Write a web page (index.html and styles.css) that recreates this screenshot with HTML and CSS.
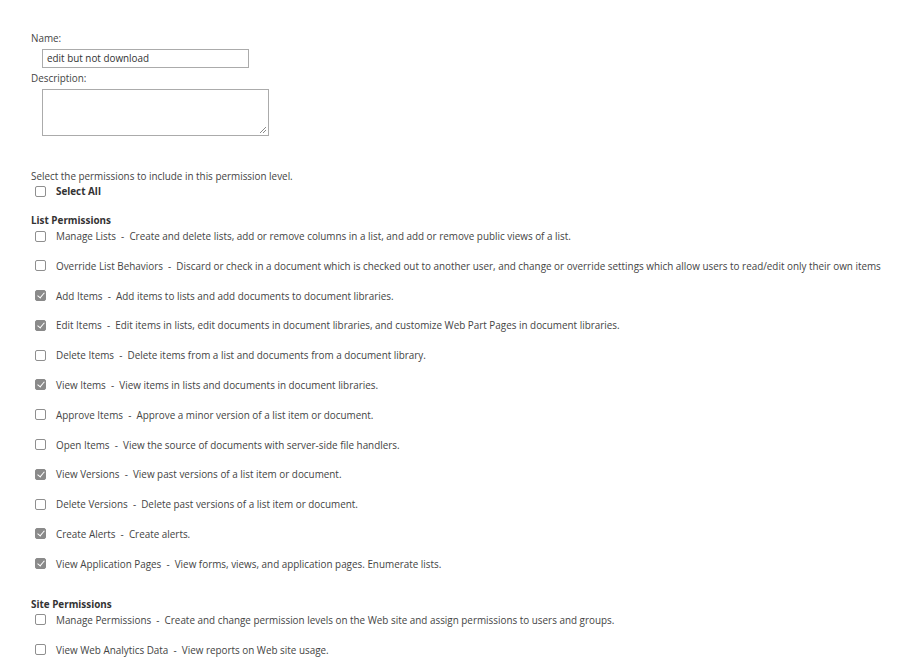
FILE: index.html
```html
<!DOCTYPE html>
<html>
<head>
<meta charset="utf-8">
<link rel="stylesheet" href="styles.css">
</head>
<body>
<div class="page">
  <div class="field">
    <div class="label">Name:</div>
    <div class="input">edit but not download</div>
  </div>
  <div class="field">
    <div class="label">Description:</div>
    <div class="textarea"><svg class="grip" width="8" height="8" viewBox="0 0 8 8"><path d="M7 1L1 7M7 4L4 7" stroke="#8a8a8a" stroke-width="1"/></svg></div>
  </div>

  <div class="intro">Select the permissions to include in this permission level.</div>
  <div class="selectall"><span class="cb"></span><b>Select All</b></div>

  <div class="group">List Permissions</div>
  <div class="rows">
    <div class="row"><span class="cb"></span>Manage Lists&nbsp; - &nbsp;Create and delete lists, add or remove columns in a list, and add or remove public views of a list.</div>
    <div class="row"><span class="cb"></span>Override List Behaviors&nbsp; - &nbsp;Discard or check in a document which is checked out to another user, and change or override settings which allow users to read/edit only their own items</div>
    <div class="row"><span class="cb on"></span>Add Items&nbsp; - &nbsp;Add items to lists and add documents to document libraries.</div>
    <div class="row"><span class="cb on"></span>Edit Items&nbsp; - &nbsp;Edit items in lists, edit documents in document libraries, and customize Web Part Pages in document libraries.</div>
    <div class="row"><span class="cb"></span>Delete Items&nbsp; - &nbsp;Delete items from a list and documents from a document library.</div>
    <div class="row"><span class="cb on"></span>View Items&nbsp; - &nbsp;View items in lists and documents in document libraries.</div>
    <div class="row"><span class="cb"></span>Approve Items&nbsp; - &nbsp;Approve a minor version of a list item or document.</div>
    <div class="row"><span class="cb"></span>Open Items&nbsp; - &nbsp;View the source of documents with server-side file handlers.</div>
    <div class="row"><span class="cb on"></span>View Versions&nbsp; - &nbsp;View past versions of a list item or document.</div>
    <div class="row"><span class="cb"></span>Delete Versions&nbsp; - &nbsp;Delete past versions of a list item or document.</div>
    <div class="row"><span class="cb on"></span>Create Alerts&nbsp; - &nbsp;Create alerts.</div>
    <div class="row"><span class="cb on"></span>View Application Pages&nbsp; - &nbsp;View forms, views, and application pages. Enumerate lists.</div>
  </div>

  <div class="group site">Site Permissions</div>
  <div class="rows">
    <div class="row"><span class="cb"></span>Manage Permissions&nbsp; - &nbsp;Create and change permission levels on the Web site and assign permissions to users and groups.</div>
    <div class="row"><span class="cb"></span>View Web Analytics Data&nbsp; - &nbsp;View reports on Web site usage.</div>
  </div>
</div>
</body>
</html>
```
FILE: styles.css
```css
html, body {
  margin: 0;
  padding: 0;
  background: #ffffff;
}
body {
  font-family: "Open Sans", "Noto Sans", sans-serif;
  font-size: 9.88px;
  color: #444444;
  line-height: 14px;
}
.page {
  padding: 31px 0 0 31px;
}
.label {
  height: 16px;
}
.input {
  margin: 2px 0 0 11px;
  width: 201px;
  height: 17px;
  border: 1px solid #ababab;
  padding: 0 0 0 4px;
  line-height: 17px;
  color: #333;
}
.field + .field {
  margin-top: 3px;
}
.textarea {
  position: relative;
  margin: 2px 0 0 11px;
  width: 225px;
  height: 45px;
  border: 1px solid #ababab;
}
.grip {
  position: absolute;
  right: 1px;
  bottom: 1px;
}
.intro {
  margin-top: 33px;
}
.selectall {
  display: flex;
  align-items: center;
  height: 16px;
}
.selectall b {
  color: #333;
  font-weight: 700;
}
.cb {
  flex: none;
  box-sizing: border-box;
  width: 11px;
  height: 11px;
  border: 1px solid #8f8f8f;
  border-radius: 2px;
  margin: 0 10px 0 4px;
  background: #fff;
  position: relative;
}
.cb.on {
  background: #8a8a8a;
  border-color: #8a8a8a;
}
.cb.on::after {
  content: "";
  position: absolute;
  left: 3px;
  top: 0px;
  width: 3px;
  height: 6px;
  border: solid #fff;
  border-width: 0 1.5px 1.5px 0;
  transform: rotate(40deg);
}
.group {
  margin-top: 14px;
  font-weight: 700;
  color: #333;
  height: 15px;
}
.group.site {
  margin-top: 25px;
}
.row {
  display: flex;
  align-items: center;
  height: 16px;
  white-space: nowrap;
}
.rows {
  display: flex;
  flex-direction: column;
  gap: 13.8px;
}
```
